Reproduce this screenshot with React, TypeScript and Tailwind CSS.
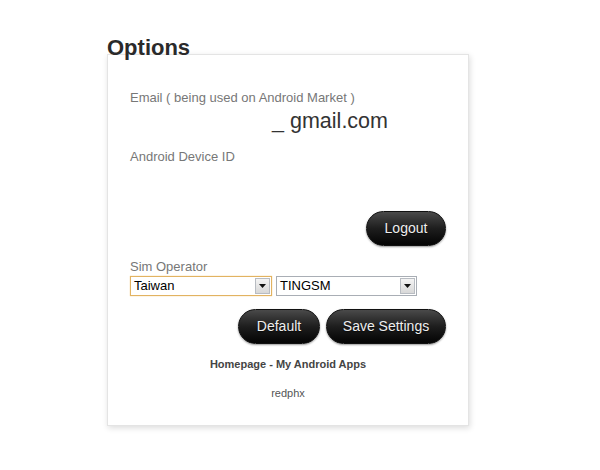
import React from "react";

function FakeSelect({ value, focused, width }: { value: string; focused?: boolean; width: string }) {
  return (
    <div
      className={`flex h-[20px] items-stretch bg-white ${width} ${
        focused ? "border border-[#e2b362] shadow-[0_0_1px_#f0c070]" : "border border-[#a9aeb5]"
      }`}
    >
      <span className="flex-1 pl-[3px] text-[13px] leading-[18px] text-black">{value}</span>
      <span className="m-[1px] flex w-[15px] items-center justify-center border border-[#b8bcc2] bg-gradient-to-b from-[#f4f4f4] to-[#d8d8d8]">
        <svg width="7" height="4" viewBox="0 0 7 4">
          <path d="M0 0h7L3.5 4z" fill="#111" />
        </svg>
      </span>
    </div>
  );
}

function DarkButton({ children, className = "" }: { children: React.ReactNode; className?: string }) {
  return (
    <button
      className={`h-[35px] rounded-full border border-[#111] bg-gradient-to-b from-[#4a4a4a] via-[#1e1e1e] to-[#050505] text-[14px] text-[#eee] shadow-[0_1px_2px_rgba(0,0,0,0.4)] [text-shadow:0_1px_1px_rgba(0,0,0,0.6)] ${className}`}
    >
      {children}
    </button>
  );
}

export default function App() {
  return (
    <div className="min-h-[470px] w-[600px] bg-white pl-[107px] pt-[34px] font-['Liberation_Sans',Arial,sans-serif]">
      <h1 className="relative z-10 mb-[-8px] text-[22px] font-bold leading-[28px] text-[#2a2a2a]">Options</h1>
      <div className="flex h-[372px] w-[362px] flex-col border border-[#e4e4e4] bg-white px-[22px] pt-[35px] shadow-[1px_2px_6px_rgba(0,0,0,0.14)]">
        <p className="text-[13px] leading-[16px] text-[#777]">Email ( being used on Android Market )</p>
        <p className="mt-[3px] flex items-baseline pl-[142px] text-[21.5px] leading-[24px] text-[#333]">
          <span className="w-[18px]">_</span>gmail.com
        </p>
        <p className="mt-[16px] text-[13px] leading-[16px] text-[#777]">Android Device ID</p>
        <div className="mt-[46px] flex justify-end">
          <DarkButton className="w-[80px]">Logout</DarkButton>
        </div>
        <p className="mt-[13px] text-[13px] leading-[16px] text-[#777]">Sim Operator</p>
        <div className="mt-[1px] flex gap-[4px]">
          <FakeSelect value="Taiwan" focused width="w-[142px]" />
          <FakeSelect value="TINGSM" width="w-[141px]" />
        </div>
        <div className="mt-[13px] flex justify-end gap-[6px]">
          <DarkButton className="w-[82px]">Default</DarkButton>
          <DarkButton className="w-[120px]">Save Settings</DarkButton>
        </div>
        <p className="mt-[13px] text-center text-[11px] font-bold leading-[15px] text-[#444]">
          Homepage - My Android Apps
        </p>
        <p className="mt-[14px] text-center text-[11px] leading-[14px] text-[#555]">redphx</p>
      </div>
    </div>
  );
}
